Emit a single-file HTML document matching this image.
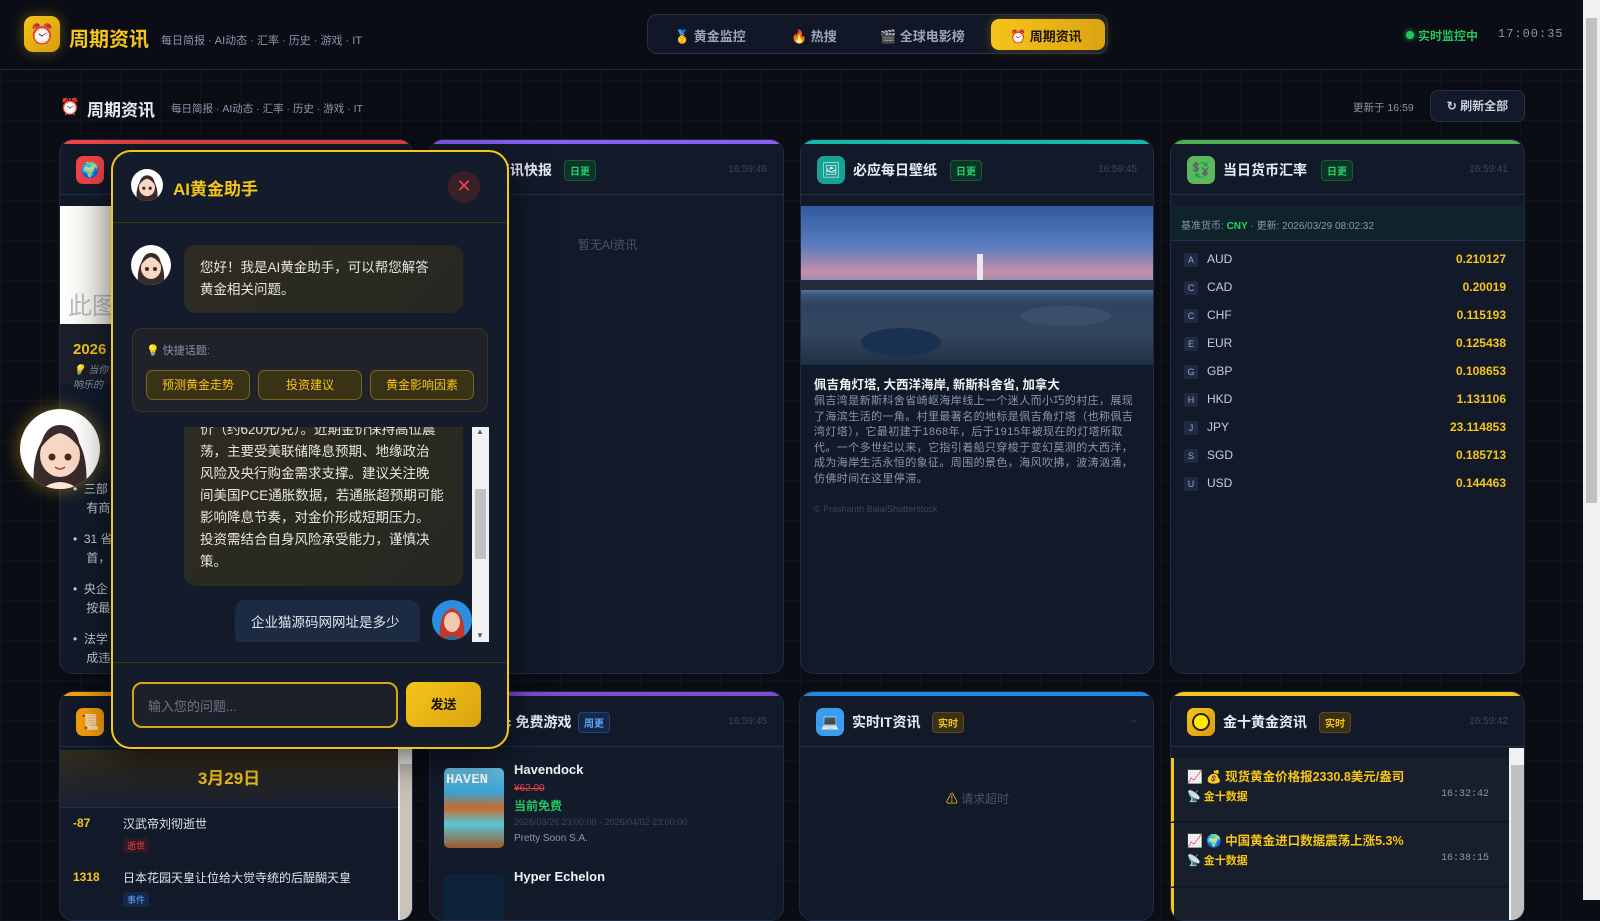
<!DOCTYPE html>
<html><head><meta charset="utf-8">
<style>
*{box-sizing:border-box;margin:0;padding:0}
body{width:1600px;height:900px;overflow:hidden;background:#0a0d14;font-family:"Liberation Sans","Noto Sans CJK SC",sans-serif;color:#e5e7eb;position:relative;
background-image:linear-gradient(rgba(40,50,70,.18) 1px,transparent 1px),linear-gradient(90deg,rgba(40,50,70,.18) 1px,transparent 1px);background-size:40px 40px;}
.abs{position:absolute}
.hdr{left:0;top:0;width:1583px;height:70px;background:#0a0d15;border-bottom:1px solid #1c2740}
.logo{left:24px;top:16px;width:36px;height:36px;border-radius:9px;background:linear-gradient(135deg,#f5c518,#d99a0c);box-shadow:0 0 14px rgba(245,197,24,.35);display:flex;align-items:center;justify-content:center;font-size:20px}
.nav{left:647px;top:14px;width:461px;height:40px;border:1px solid #253049;border-radius:10px;background:#111726}
.nav span{position:absolute;top:11px;font-size:13px;color:#9aa6bd;font-weight:bold}
.navact{left:343px;top:4px;width:114px;height:31px;border-radius:8px;background:linear-gradient(90deg,#f5c518,#dca313);box-shadow:0 0 10px rgba(245,197,24,.3)}
.card{background:#121a2a;border:1px solid #1f2b45;border-radius:14px;overflow:hidden}
.card .bar{position:absolute;left:0;top:0;right:0;height:4px}
.card .ch{position:absolute;left:0;top:0;right:0;height:55px;border-bottom:1px solid #1f2f50}
.ic{position:absolute;left:16px;top:16px;width:28px;height:28px;border-radius:7px;display:flex;align-items:center;justify-content:center;font-size:15px}
.ct{position:absolute;left:52px;top:20px;font-size:14px;font-weight:bold;color:#e8ebf2}
.badge{position:absolute;top:20px;font-size:10px;font-weight:bold;padding:2px 5px;border-radius:4px}
.bg{background:#0d3326;color:#22d36b;border:1px solid #155c3a}
.by{background:#3a3015;color:#f5c518;border:1px solid #5a4a1b}
.bb{background:#16284a;color:#60a5fa;border:1px solid #274371}
.tm{position:absolute;right:16px;top:24px;font-size:10px;color:#3b465c}
.rate{position:absolute;left:13px;width:322px;height:20px;font-size:12px}
.rate b{position:absolute;left:0;top:2px;width:14px;height:14px;background:#1f2a44;color:#9aa6bd;font-size:9px;font-weight:normal;text-align:center;line-height:14px;border-radius:2px}
.rate i{position:absolute;left:23px;top:1px;font-style:normal;color:#c8cfdc}
.rate em{position:absolute;right:0;top:1px;font-style:normal;color:#f5c518;font-weight:bold}
.chat{left:111px;top:150px;width:398px;height:599px;border:2px solid #f5c518;border-radius:20px;background:#141b2b;box-shadow:0 10px 40px rgba(0,0,0,.6);overflow:hidden}
.bub{background:linear-gradient(135deg,#2e2b22,#272822);border-radius:12px;color:#e8e6e0;font-size:13.5px;line-height:22px;white-space:nowrap}
.qb{position:absolute;top:41px;height:30px;border:1px solid #7a6418;background:#3a3217;border-radius:7px;color:#f5c518;font-size:12px;text-align:center;line-height:28px}
</style></head><body>

<div class="abs hdr"></div>
<div class="abs logo">⏰</div>
<div class="abs" style="left:69px;top:23px;font-size:20px;font-weight:bold;color:#f5c518">周期资讯</div>
<div class="abs" style="left:161px;top:32px;font-size:11px;color:#8a96ad">每日简报 · AI动态 · 汇率 · 历史 · 游戏 · IT</div>
<div class="abs nav">
 <span style="left:26px">🥇 黄金监控</span>
 <span style="left:143px">🔥 热搜</span>
 <span style="left:232px">🎬 全球电影榜</span>
 <div class="abs navact"></div>
 <span style="left:362px;color:#1a1405">⏰ 周期资讯</span>
</div>
<div class="abs" style="left:1406px;top:31px;width:8px;height:8px;border-radius:50%;background:#22c55e;box-shadow:0 0 6px #22c55e"></div>
<div class="abs" style="left:1418px;top:27px;font-size:12px;color:#22c55e;font-weight:bold">实时监控中</div>
<div class="abs" style="left:1498px;top:27px;font-size:12px;color:#8a96ad;font-family:'Liberation Mono',monospace;letter-spacing:1px">17:00:35</div>
<div class="abs" style="left:1583px;top:0;width:17px;height:900px;background:#f1f1f1"><div style="position:absolute;left:3px;top:18px;width:11px;height:485px;background:#c1c1c1"></div></div>

<div class="abs" style="left:60px;top:97px;font-size:16px">⏰</div>
<div class="abs" style="left:87px;top:96px;font-size:17px;font-weight:bold;color:#e8ebf2">周期资讯</div>
<div class="abs" style="left:171px;top:101px;font-size:10.5px;color:#8a96ad">每日简报 · AI动态 · 汇率 · 历史 · 游戏 · IT</div>
<div class="abs" style="left:1353px;top:100px;font-size:10.5px;color:#8a96ad">更新于 16:59</div>
<div class="abs" style="left:1430px;top:90px;width:95px;height:32px;border:1px solid #253049;border-radius:8px;background:#121a2a;font-size:12px;font-weight:bold;color:#c8cfdc;text-align:center;line-height:30px">↻ 刷新全部</div>

<!-- row1 -->
<div class="abs card" style="left:59px;top:139px;width:354px;height:535px">
 <div class="bar" style="background:#ef4444"></div><div class="ch"></div>
 <div class="ic" style="background:#ef4444">🌍</div>
 <div class="abs" style="left:0;top:66px;width:60px;height:118px;background:linear-gradient(90deg,#fff,#f5f1e6)"><span style="position:absolute;left:8px;top:80px;font-size:24px;color:#bbb">此图</span></div>
 <div class="abs" style="left:0;top:184px;width:354px;height:60px;background:#1a1f2a"></div>
 <div class="abs" style="left:13px;top:201px;font-size:15px;font-weight:bold;color:#f5c518">2026</div>
 <div class="abs" style="left:13px;top:223px;font-size:10px;color:#8a96ad;font-style:italic;line-height:15px">💡 当你<br>响乐的</div>
 <div class="abs" style="left:13px;top:340px;font-size:12px;color:#c8cfdc;line-height:19px">•&nbsp; 三部<br>&nbsp;&nbsp;&nbsp; 有商</div>
 <div class="abs" style="left:13px;top:390px;font-size:12px;color:#c8cfdc;line-height:19px">•&nbsp; 31 省<br>&nbsp;&nbsp;&nbsp; 首，</div>
 <div class="abs" style="left:13px;top:440px;font-size:12px;color:#c8cfdc;line-height:19px">•&nbsp; 央企<br>&nbsp;&nbsp;&nbsp; 按最</div>
 <div class="abs" style="left:13px;top:490px;font-size:12px;color:#c8cfdc;line-height:19px">•&nbsp; 法学<br>&nbsp;&nbsp;&nbsp; 成违</div>
</div>
<div class="abs card" style="left:429px;top:139px;width:355px;height:535px">
 <div class="bar" style="background:#8b5cf6"></div><div class="ch"></div>
 <div class="ic" style="background:#8b5cf6">🤖</div>
 <div class="ct">AI资讯快报</div><div class="badge bg" style="left:134px">日更</div><div class="tm">16:59:46</div>
 <div class="abs" style="left:0;width:355px;top:96px;text-align:center;font-size:12px;color:#4a5368">暂无AI资讯</div>
</div>
<div class="abs card" style="left:800px;top:139px;width:354px;height:535px">
 <div class="bar" style="background:#14b8a6"></div><div class="ch"></div>
 <div class="ic" style="background:#14a394">🖼</div>
 <div class="ct">必应每日壁纸</div><div class="badge bg" style="left:149px">日更</div><div class="tm">16:59:45</div>
 <div class="abs" style="left:0;top:66px;width:354px;height:159px;overflow:hidden;background:linear-gradient(180deg,#2f5b9e 0%,#5a7cbf 25%,#c78fa8 42%,#7a8cb8 50%,#3a5576 56%,#2e4461 62%,#34465e 80%,#1f2f45 100%)">
  <div style="position:absolute;left:176px;top:48px;width:6px;height:26px;background:#e8e8ee"></div>
  <div style="position:absolute;left:0;top:74px;width:354px;height:10px;background:#222c3a"></div>
  <div style="position:absolute;left:60px;top:122px;width:80px;height:28px;border-radius:50%;background:#1a3252"></div>
  <div style="position:absolute;left:220px;top:100px;width:90px;height:20px;border-radius:50%;background:#3a4f6a"></div>
 </div>
 <div class="abs" style="left:13px;top:234px;font-size:12.5px;font-weight:bold;color:#f0f2f6">佩吉角灯塔, 大西洋海岸, 新斯科舍省, 加拿大</div>
 <div class="abs" style="left:13px;top:254px;width:326px;font-size:11px;letter-spacing:0.4px;color:#8a96ad;line-height:15.5px">佩吉湾是新斯科舍省崎岖海岸线上一个迷人而小巧的村庄，展现了海滨生活的一角。村里最著名的地标是佩吉角灯塔（也称佩吉湾灯塔），它最初建于1868年，后于1915年被现在的灯塔所取代。一个多世纪以来，它指引着船只穿梭于变幻莫测的大西洋，成为海岸生活永恒的象征。周围的景色，海风吹拂，波涛汹涌，仿佛时间在这里停滞。</div>
 <div class="abs" style="left:13px;top:364px;font-size:9px;color:#3b465c">© Prashanth Bala/Shutterstock</div>
</div>
<div class="abs card" style="left:1170px;top:139px;width:355px;height:535px">
 <div class="bar" style="background:#4caf50"></div><div class="ch"></div>
 <div class="ic" style="background:#5cb85c">💱</div>
 <div class="ct">当日货币汇率</div><div class="badge bg" style="left:150px">日更</div><div class="tm">16:59:41</div>
 <div class="abs" style="left:0;top:66px;width:355px;height:35px;background:#10222a;border-bottom:1px solid #1f2f50;font-size:10px;color:#8a96ad;padding:11px 10px">基准货币: <b style="color:#22d36b">CNY</b> · 更新: 2026/03/29 08:02:32</div>
 <div class="rate" style="top:111px"><b>A</b><i>AUD</i><em>0.210127</em></div>
 <div class="rate" style="top:139px"><b>C</b><i>CAD</i><em>0.20019</em></div>
 <div class="rate" style="top:167px"><b>C</b><i>CHF</i><em>0.115193</em></div>
 <div class="rate" style="top:195px"><b>E</b><i>EUR</i><em>0.125438</em></div>
 <div class="rate" style="top:223px"><b>G</b><i>GBP</i><em>0.108653</em></div>
 <div class="rate" style="top:251px"><b>H</b><i>HKD</i><em>1.131106</em></div>
 <div class="rate" style="top:279px"><b>J</b><i>JPY</i><em>23.114853</em></div>
 <div class="rate" style="top:307px"><b>S</b><i>SGD</i><em>0.185713</em></div>
 <div class="rate" style="top:335px"><b>U</b><i>USD</i><em>0.144463</em></div>
</div>

<!-- row2 -->
<div class="abs card" style="left:59px;top:691px;width:354px;height:230px">
 <div class="bar" style="background:#f59e0b"></div><div class="ch"></div>
 <div class="ic" style="background:#f59e0b">📜</div>
 <div class="abs" style="left:0;top:58px;width:338px;height:58px;background:linear-gradient(180deg,#302c1c,#1c2030);text-align:center;font-size:17px;font-weight:bold;color:#f5c518;line-height:58px;border-bottom:1px solid #1f2f50">3月29日</div>
 <div class="abs" style="left:13px;top:124px;font-size:12px;font-weight:bold;color:#f5c518">-87</div>
 <div class="abs" style="left:63px;top:123px;font-size:12px;color:#e0e4ec">汉武帝刘彻逝世</div>
 <div class="abs" style="left:63px;top:146px;font-size:9px;color:#ef4444;background:#2d1a22;padding:1px 4px;border-radius:3px">逝世</div>
 <div class="abs" style="left:13px;top:178px;font-size:12px;font-weight:bold;color:#f5c518">1318</div>
 <div class="abs" style="left:63px;top:177px;font-size:12px;color:#e0e4ec">日本花园天皇让位给大觉寺统的后醍醐天皇</div>
 <div class="abs" style="left:63px;top:200px;font-size:9px;color:#60a5fa;background:#16284a;padding:1px 4px;border-radius:3px">事件</div>
 <div class="abs" style="left:338px;top:56px;width:16px;height:180px;background:#f1f1f1"><div style="position:absolute;left:2px;top:16px;width:12px;height:170px;background:#c8c4b8"></div></div>
</div>
<div class="abs card" style="left:429px;top:691px;width:355px;height:230px">
 <div class="bar" style="background:#7c4dcc"></div><div class="ch"></div>
 <div class="ct">Epic 免费游戏</div><div class="badge bb" style="left:148px">周更</div><div class="tm">16:59:45</div>
 <div class="abs" style="left:0;top:56px;width:355px;height:116px;background:#141b2b"></div>
 <div class="abs" style="left:14px;top:76px;width:60px;height:80px;border-radius:5px;background:linear-gradient(180deg,#6ec6ea 0%,#3ba6d6 30%,#c66a2c 50%,#5ac6d8 70%,#a0572a 100%)"><span style="position:absolute;left:2px;top:4px;font-size:14px;font-weight:bold;color:#fff;font-family:'Liberation Mono',monospace">HAVEN</span></div>
 <div class="abs" style="left:84px;top:70px;font-size:13px;font-weight:bold;color:#f0f2f6">Havendock</div>
 <div class="abs" style="left:84px;top:91px;font-size:10px;color:#ef4444;text-decoration:line-through">¥62.00</div>
 <div class="abs" style="left:84px;top:105px;font-size:12px;font-weight:bold;color:#22c55e">当前免费</div>
 <div class="abs" style="left:84px;top:125px;font-size:9px;color:#3b465c">2026/03/26 23:00:00 - 2026/04/02 23:00:00</div>
 <div class="abs" style="left:84px;top:141px;font-size:10px;color:#8a96ad">Pretty Soon S.A.</div>
 <div class="abs" style="left:14px;top:182px;width:60px;height:50px;border-radius:5px;background:#0c2238"></div>
 <div class="abs" style="left:84px;top:177px;font-size:13px;font-weight:bold;color:#f0f2f6">Hyper Echelon</div>
</div>
<div class="abs card" style="left:799px;top:691px;width:355px;height:230px">
 <div class="bar" style="background:#1e88e5"></div><div class="ch"></div>
 <div class="ic" style="background:#3b9cf0">💻</div>
 <div class="ct">实时IT资讯</div><div class="badge by" style="left:132px">实时</div><div class="tm">--</div>
 <div class="abs" style="left:0;width:355px;top:98px;text-align:center;font-size:12px;color:#4a5368"><span style="color:#f5c518">⚠</span> 请求超时</div>
</div>
<div class="abs card" style="left:1170px;top:691px;width:355px;height:230px">
 <div class="bar" style="background:#f5c518"></div><div class="ch"></div>
 <div class="ic" style="background:linear-gradient(135deg,#f5c518,#d99a0c)"><div style="width:18px;height:18px;border-radius:50%;background:#ffea00;border:2px solid #222"></div></div>
 <div class="ct">金十黄金资讯</div><div class="badge by" style="left:148px">实时</div><div class="tm">16:59:42</div>
 <div class="abs" style="left:0;top:66px;width:338px;height:64px;background:#181e2a;border-left:3px solid #f5c518;border-bottom:1px solid #0e131e"></div>
 <div class="abs" style="left:16px;top:74px;font-size:12.5px;font-weight:bold;color:#f5c518">📈 💰 现货黄金价格报2330.8美元/盎司</div>
 <div class="abs" style="left:16px;top:96px;font-size:11px;font-weight:bold;color:#f5c518">📡 金十数据</div>
 <div class="abs" style="left:270px;top:97px;font-size:10px;color:#8a96ad;font-family:'Liberation Mono',monospace">16:32:42</div>
 <div class="abs" style="left:0;top:131px;width:338px;height:64px;background:#181e2a;border-left:3px solid #f5c518;border-bottom:1px solid #0e131e"></div>
 <div class="abs" style="left:16px;top:138px;font-size:12.5px;font-weight:bold;color:#f5c518">📈 🌍 中国黄金进口数据震荡上涨5.3%</div>
 <div class="abs" style="left:16px;top:160px;font-size:11px;font-weight:bold;color:#f5c518">📡 金十数据</div>
 <div class="abs" style="left:270px;top:161px;font-size:10px;color:#8a96ad;font-family:'Liberation Mono',monospace">16:38:15</div>
 <div class="abs" style="left:0;top:196px;width:338px;height:40px;background:#181e2a;border-left:3px solid #f5c518"></div>
 <div class="abs" style="left:338px;top:56px;width:17px;height:180px;background:#f1f1f1"><div style="position:absolute;left:2px;top:17px;width:13px;height:170px;background:#c1c1c1"></div></div>
</div>

<!-- floating avatar -->
<div class="abs" style="left:20px;top:409px;width:80px;height:80px;border-radius:50%;background:#fff;box-shadow:0 0 18px rgba(245,197,24,.45);overflow:hidden">
 <svg width="80" height="80" viewBox="0 0 80 80"><path d="M14 80 Q10 30 40 16 Q70 30 66 80Z" fill="#3a2a2a"/><ellipse cx="40" cy="46" rx="20" ry="22" fill="#f8d8c4"/><path d="M20 40 Q24 16 40 16 Q58 16 60 40 Q50 26 40 24 Q30 26 20 40Z" fill="#3a2a2a"/><circle cx="32" cy="48" r="3.5" fill="#4a2a1a"/><circle cx="48" cy="48" r="3.5" fill="#4a2a1a"/><path d="M35 58 Q40 62 45 58" stroke="#c04040" stroke-width="1.5" fill="none"/><path d="M22 80 Q40 66 58 80Z" fill="#fde7dc"/></svg>
</div>

<!-- chat -->
<div class="abs chat">
 <div class="abs" style="left:0;top:0;width:394px;height:71px;border-bottom:1px solid #3a3418"></div>
 <div class="abs" style="left:18px;top:17px;width:32px;height:32px;border-radius:50%;background:#fff;overflow:hidden"><svg width="32" height="32" viewBox="0 0 80 80"><path d="M14 80 Q10 30 40 16 Q70 30 66 80Z" fill="#3a2a2a"/><ellipse cx="40" cy="46" rx="20" ry="22" fill="#f8d8c4"/><path d="M20 40 Q24 16 40 16 Q58 16 60 40 Q50 26 40 24 Q30 26 20 40Z" fill="#3a2a2a"/><circle cx="32" cy="48" r="4" fill="#4a2a1a"/><circle cx="48" cy="48" r="4" fill="#4a2a1a"/></svg></div>
 <div class="abs" style="left:60px;top:23px;font-size:17px;font-weight:bold;color:#f5c518">AI黄金助手</div>
 <div class="abs" style="left:335px;top:19px;width:32px;height:32px;border-radius:50%;background:#3a1f28;color:#ef4444;font-size:18px;text-align:center;line-height:31px">✕</div>
 <div class="abs" style="left:18px;top:93px;width:40px;height:40px;border-radius:50%;background:#fff;overflow:hidden"><svg width="40" height="40" viewBox="0 0 80 80"><path d="M14 80 Q10 30 40 16 Q70 30 66 80Z" fill="#3a2a2a"/><ellipse cx="40" cy="46" rx="20" ry="22" fill="#f8d8c4"/><path d="M20 40 Q24 16 40 16 Q58 16 60 40 Q50 26 40 24 Q30 26 20 40Z" fill="#3a2a2a"/><circle cx="32" cy="48" r="4" fill="#4a2a1a"/><circle cx="48" cy="48" r="4" fill="#4a2a1a"/></svg></div>
 <div class="abs bub" style="left:71px;top:93px;width:279px;height:68px;padding:12px 16px">您好！我是AI黄金助手，可以帮您解答<br>黄金相关问题。</div>
 <div class="abs" style="left:19px;top:176px;width:356px;height:84px;border:1px solid #3a3418;border-radius:10px;background:#1f2229">
  <div class="abs" style="left:13px;top:13px;font-size:11px;color:#8a96ad">💡 快捷话题:</div>
  <div class="qb" style="left:13px;width:104px">预测黄金走势</div>
  <div class="qb" style="left:125px;width:104px">投资建议</div>
  <div class="qb" style="left:237px;width:104px">黄金影响因素</div>
 </div>
 <div class="abs" style="left:0;top:275px;width:394px;height:215px;overflow:hidden">
  <div class="abs bub" style="left:71px;top:-16px;width:279px;height:175px;padding:8px 16px">价（约620元/克）。近期金价保持高位震<br>荡，主要受美联储降息预期、地缘政治<br>风险及央行购金需求支撑。建议关注晚<br>间美国PCE通胀数据，若通胀超预期可能<br>影响降息节奏，对金价形成短期压力。<br>投资需结合自身风险承受能力，谨慎决<br>策。</div>
  <div class="abs" style="left:122px;top:173px;width:185px;height:45px;border-radius:10px;background:#1c2a42;font-size:13.5px;color:#e0e4ec;padding:11px 16px">企业猫源码网网址是多少</div>
  <div class="abs" style="left:319px;top:173px;width:40px;height:40px;border-radius:50%;background:#2a8fe0;overflow:hidden"><svg width="40" height="40" viewBox="0 0 40 40"><path d="M8 40 Q6 12 20 8 Q34 12 32 40Z" fill="#c0392b"/><ellipse cx="20" cy="22" rx="8" ry="10" fill="#f5c8b0"/><path d="M10 40 Q20 32 30 40Z" fill="#2c6aa0"/></svg></div>
  <div class="abs" style="left:359px;top:0;width:17px;height:215px;background:#f1f1f1"><div style="position:absolute;left:3px;top:62px;width:11px;height:70px;background:#c1c1c1"></div><span style="position:absolute;left:4px;top:0;font-size:8px;color:#555">▲</span><span style="position:absolute;left:4px;bottom:2px;font-size:8px;color:#555">▼</span></div>
 </div>
 <div class="abs" style="left:0;top:510px;width:394px;height:1px;background:#3a3418"></div>
 <div class="abs" style="left:19px;top:530px;width:266px;height:46px;border:2px solid #d4a816;border-radius:10px;background:#1d2029;font-size:13px;color:#6b7488;padding:12px 14px">输入您的问题...</div>
 <div class="abs" style="left:293px;top:530px;width:75px;height:45px;border-radius:9px;background:linear-gradient(135deg,#f5c518,#d9a312);color:#1a1405;font-size:13px;font-weight:bold;text-align:center;line-height:45px">发送</div>
</div>
</body></html>
